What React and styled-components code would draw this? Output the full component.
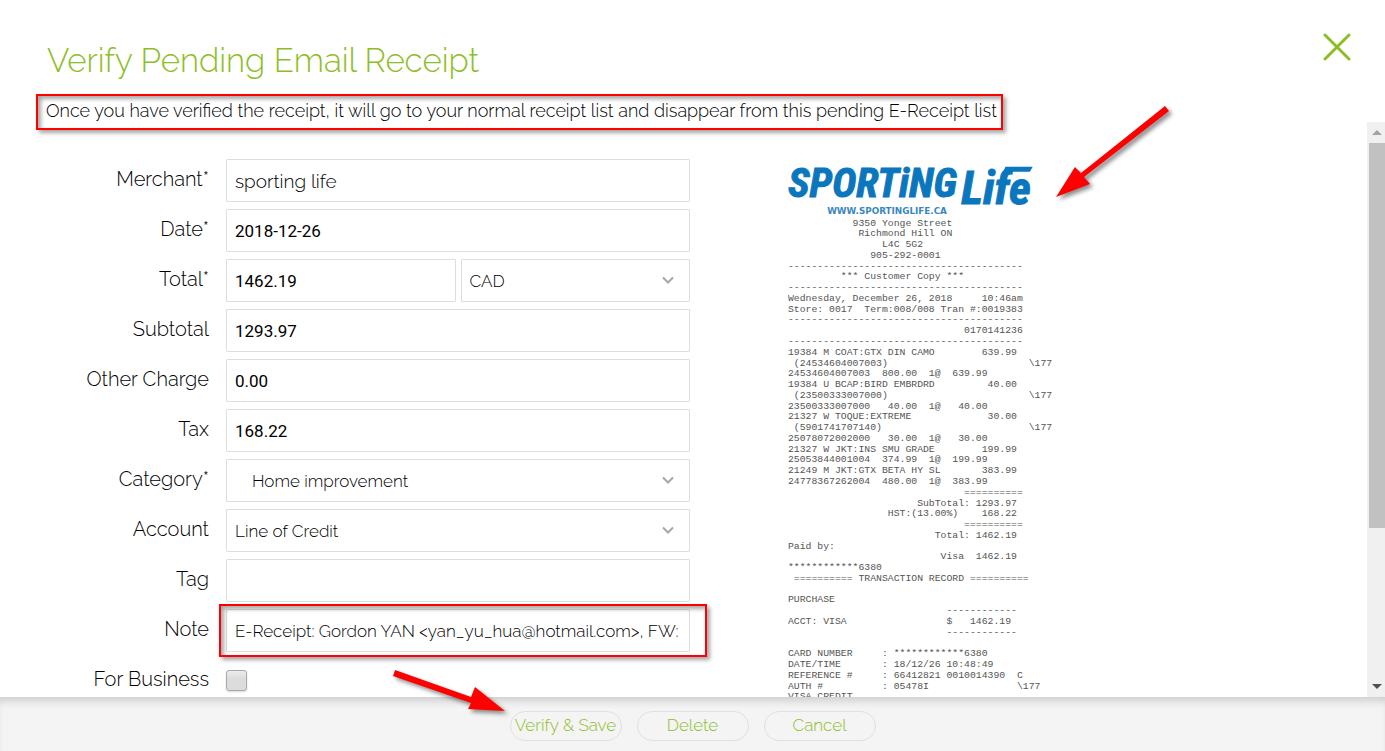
import React, { useState } from "react";
import styled, { createGlobalStyle, css } from "styled-components";

const GREEN = "#8ebe27";
const RED = "#ff0000";

const at = (...parts) =>
  parts.reduce((line, [col, text]) => line.padEnd(col) + text, "");

const DASHES = "-".repeat(40);
const STARS = "*".repeat(12);

const RECEIPT_LINES = [
  at([11, "9350 Yonge Street"]),
  at([12, "Richmond Hill ON"]),
  at([16, "L4C 5G2"]),
  at([14, "905-292-0001"]),
  DASHES,
  at([9, "*** Customer Copy ***"]),
  DASHES,
  at([0, "Wednesday, December 26, 2018"], [33, "10:46am"]),
  "Store: 0017  Term:008/008 Tran #:0019383",
  DASHES,
  at([30, "0170141236"]),
  DASHES,
  at([0, "19384 M COAT:GTX DIN CAMO"], [33, "639.99"]),
  at([1, "(24534604007003)"], [41, "\\177"]),
  at([0, "24534604007003"], [16, "800.00"], [24, "1@"], [28, "639.99"]),
  at([0, "19384 U BCAP:BIRD EMBRDRD"], [34, "40.00"]),
  at([1, "(23500333007000)"], [41, "\\177"]),
  at([0, "23500333007000"], [17, "40.00"], [24, "1@"], [29, "40.00"]),
  at([0, "21327 W TOQUE:EXTREME"], [34, "30.00"]),
  at([1, "(5901741707140)"], [41, "\\177"]),
  at([0, "25078072002000"], [17, "30.00"], [24, "1@"], [29, "30.00"]),
  at([0, "21327 W JKT:INS SMU GRADE"], [33, "199.99"]),
  at([0, "25053844001004"], [16, "374.99"], [24, "1@"], [28, "199.99"]),
  at([0, "21249 M JKT:GTX BETA HY SL"], [33, "383.99"]),
  at([0, "24778367262004"], [16, "480.00"], [24, "1@"], [28, "383.99"]),
  at([30, "=========="]),
  at([22, "SubTotal:"], [32, "1293.97"]),
  at([17, "HST:(13.00%)"], [33, "168.22"]),
  at([30, "=========="]),
  at([25, "Total:"], [32, "1462.19"]),
  "Paid by:",
  at([26, "Visa"], [32, "1462.19"]),
  `${STARS}6380`,
  at([1, "=========="], [12, "TRANSACTION RECORD"], [31, "=========="]),
  "",
  "PURCHASE",
  at([27, "------------"]),
  at([0, "ACCT: VISA"], [27, "$"], [31, "1462.19"]),
  at([27, "------------"]),
  "",
  at([0, "CARD NUMBER"], [16, `: ${STARS}6380`]),
  at([0, "DATE/TIME"], [16, ": 18/12/26 10:48:49"]),
  at([0, "REFERENCE #"], [16, ": 66412821 0010014390"], [39, "C"]),
  at([0, "AUTH #"], [16, ": 05478I"], [39, "\\177"]),
  "VISA CREDIT",
];

function Field({ id, label, children }) {
  return (
    <Row>
      <Label htmlFor={id}>{label}</Label>
      <Controls>{children}</Controls>
    </Row>
  );
}

function TextField({ id, label, value, onChange, numeric, large }) {
  return (
    <Field id={id} label={label}>
      <Input
        id={id}
        name={id}
        type="text"
        value={value}
        onChange={onChange}
        $numeric={numeric}
        $large={large}
      />
    </Field>
  );
}

function Dropdown({ indent, children, ...props }) {
  return (
    <SelectWrap>
      <Select $indent={indent} {...props}>
        {children}
      </Select>
      <Chevron viewBox="0 0 12 8" aria-hidden="true">
        <path d="M1 1.500l5 5 5-5" />
      </Chevron>
    </SelectWrap>
  );
}

function Receipt() {
  return (
    <ReceiptImage viewBox="0 0 286 562" role="img" aria-label="Receipt">
      <g fill="#0a76bd" stroke="#0a76bd">
        <LogoText x="0" y="39" fontSize="42">
          SPORTiNG
        </LogoText>
        <LogoText x="177" y="46" fontSize="48">
          Life
        </LogoText>
        <path d="M222 8h28l-3 5h-27z" stroke="none" />
      </g>
      <SiteText x="40" y="56">
        WWW.SPORTINGLIFE.CA
      </SiteText>
      {RECEIPT_LINES.map((line, i) => (
        <ReceiptText key={i} x="0" y={68 + i * 11}>
          {line}
        </ReceiptText>
      ))}
    </ReceiptImage>
  );
}

function App() {
  const [values, setValues] = useState({
    merchant: "sporting life",
    date: "2018-12-26",
    total: "1462.19",
    currency: "CAD",
    subtotal: "1293.97",
    otherCharge: "0.00",
    tax: "168.22",
    category: "Home improvement",
    account: "Line of Credit",
    tag: "",
    note: "E-Receipt: Gordon YAN <yan_yu_hua@hotmail.com>, FW: Y",
  });

  const onChange = (e) => {
    setValues({ ...values, [e.target.name]: e.target.value });
  };

  return (
    <Page>
      <GlobalStyle />

      <Header>
        <div>
          <Title>Verify Pending Email Receipt</Title>
          <Notice>
            Once you have verified the receipt, it will go to your normal
            receipt list and disappear from this pending E-Receipt list
          </Notice>
        </div>
        <CloseButton aria-label="Close">
          <svg width="28" height="28" viewBox="0 0 28 28">
            <path d="M2 2l24 24M26 2l-24 24" />
          </svg>
        </CloseButton>
      </Header>

      <Body>
        <Content>
          <Form>
            <TextField
              id="merchant"
              label="Merchant*"
              value={values.merchant}
              onChange={onChange}
              large
            />
            <TextField
              id="date"
              label="Date*"
              value={values.date}
              onChange={onChange}
              numeric
            />
            <Field id="total" label="Total*">
              <Input
                id="total"
                name="total"
                type="text"
                value={values.total}
                onChange={onChange}
                $numeric
              />
              <Dropdown
                name="currency"
                aria-label="Currency"
                value={values.currency}
                onChange={onChange}
              >
                <option>CAD</option>
              </Dropdown>
            </Field>
            <TextField
              id="subtotal"
              label="Subtotal"
              value={values.subtotal}
              onChange={onChange}
              numeric
            />
            <TextField
              id="otherCharge"
              label="Other Charge"
              value={values.otherCharge}
              onChange={onChange}
              numeric
            />
            <TextField
              id="tax"
              label="Tax"
              value={values.tax}
              onChange={onChange}
              numeric
            />
            <Field id="category" label="Category*">
              <Dropdown
                id="category"
                name="category"
                value={values.category}
                onChange={onChange}
                indent
              >
                <option>Home improvement</option>
              </Dropdown>
            </Field>
            <Field id="account" label="Account">
              <Dropdown
                id="account"
                name="account"
                value={values.account}
                onChange={onChange}
              >
                <option>Line of Credit</option>
              </Dropdown>
            </Field>
            <TextField
              id="tag"
              label="Tag"
              value={values.tag}
              onChange={onChange}
            />
            <Field id="note" label="Note">
              <Input
                id="note"
                name="note"
                type="text"
                value={values.note}
                onChange={onChange}
              />
              <Highlight />
            </Field>
            <Field id="business" label="For Business">
              <Checkbox id="business" type="checkbox" />
            </Field>
          </Form>

          <Preview>
            <Receipt />
          </Preview>
        </Content>

        <Scrollbar>
          <ScrollButton aria-label="Scroll up">
            <svg width="10" height="5" viewBox="0 0 10 5">
              <path d="M5 0l5 5H0z" fill="#a3a3a3" />
            </svg>
          </ScrollButton>
          <Thumb />
          <ScrollButton aria-label="Scroll down">
            <svg width="10" height="5" viewBox="0 0 10 5">
              <path d="M0 0h10L5 5z" fill="#505050" />
            </svg>
          </ScrollButton>
        </Scrollbar>

        <ReceiptArrow viewBox="0 0 120 100" aria-hidden="true">
          <path d="M110 0l4 5L29 71l6 7L1 91l19-30 6 6z" />
        </ReceiptArrow>
      </Body>

      <Footer>
        <Action>
          Verify &amp; Save
          <SaveArrow viewBox="0 0 120 52" aria-hidden="true">
            <path d="M2 0l76 27 4-10 30 24-37-2 3-6L0 6z" />
          </SaveArrow>
        </Action>
        <Action>Delete</Action>
        <Action>Cancel</Action>
      </Footer>
    </Page>
  );
}

const GlobalStyle = createGlobalStyle`
  * {
    box-sizing: border-box;
  }

  body {
    margin: 0;
    background: #fff;
    color: #000;
    font-family: Raleway, Lato, sans-serif;
    font-weight: 300;
  }

  button,
  input,
  select {
    font: inherit;
    color: inherit;
  }
`;

const Page = styled.div`
  display: flex;
  flex-direction: column;
  height: 100vh;
  overflow: hidden;
`;

const Header = styled.header`
  display: flex;
  justify-content: space-between;
  align-items: flex-start;
  padding: 32px 33px 0 36px;
`;

const Title = styled.h1`
  margin: 8px 0 12px;
  padding-left: 11px;
  color: ${GREEN};
  font-size: 33px;
  line-height: 42px;
  font-weight: 300;
`;

const Notice = styled.p`
  width: fit-content;
  margin: 0;
  padding: 0 4px 2px 8px;
  border: 2px solid ${RED};
  box-shadow: 3px 3px 4px rgba(0, 0, 0, 0.35),
    inset 3px 3px 4px rgba(0, 0, 0, 0.35);
  font-size: 18px;
  line-height: 30px;
`;

const CloseButton = styled.button`
  display: flex;
  padding: 1px;
  border: 0;
  background: none;
  cursor: pointer;

  path {
    fill: none;
    stroke: ${GREEN};
    stroke-width: 3;
    stroke-linecap: round;
  }
`;

const Body = styled.main`
  position: relative;
  display: flex;
  flex: 1;
  min-height: 0;
  margin-top: -8px;
`;

const Content = styled.div`
  display: grid;
  flex: 1;
  grid-template-columns: minmax(0, 690px) minmax(280px, 1fr);
  align-items: start;
  padding-top: 37px;
  overflow-y: auto;
  scrollbar-width: none;
`;

const Form = styled.form`
  display: flex;
  flex-direction: column;
  gap: 7px;
`;

const Row = styled.div`
  display: flex;
  gap: 17px;
`;

const Label = styled.label`
  flex: 0 0 209px;
  font-size: 20px;
  line-height: 40px;
  text-align: right;
`;

const Controls = styled.div`
  position: relative;
  display: grid;
  flex: 1;
  grid-auto-columns: minmax(0, 1fr);
  grid-auto-flow: column;
  align-items: center;
  gap: 5px;
  min-width: 0;
  height: 43px;
`;

const box = css`
  width: 100%;
  height: 43px;
  border: 1px solid #dedede;
  border-radius: 1px;
  background: #fff;
  outline: none;
  font-size: 17px;
`;

const Input = styled.input`
  ${box}
  padding: 0 8px;
  ${({ $large }) => $large && "font-size: 19px;"}
  ${({ $numeric }) =>
    $numeric &&
    css`
      font-family: Roboto, sans-serif;
      font-weight: 400;
    `}
`;

const SelectWrap = styled.div`
  position: relative;
`;

const Select = styled.select`
  ${box}
  display: block;
  appearance: none;
  padding: 0 30px 0 ${({ $indent }) => ($indent ? 25 : 8)}px;
`;

const Chevron = styled.svg`
  position: absolute;
  top: 17px;
  right: 16px;
  width: 12px;
  height: 8px;
  fill: none;
  stroke: #a6a6a6;
  stroke-width: 2;
  pointer-events: none;
`;

const Checkbox = styled.input`
  appearance: none;
  width: 21px;
  height: 21px;
  margin: 0;
  border: 1px solid #a8a8a8;
  border-radius: 3px;
  background: linear-gradient(#ececec, #dcdcdc 40%);
  box-shadow: 0 1px 2px rgba(0, 0, 0, 0.15);
`;

const Highlight = styled.div`
  position: absolute;
  inset: -5px -17px -5px -7px;
  border: 2px solid ${RED};
  box-shadow: 3px 3px 4px rgba(0, 0, 0, 0.35),
    inset 3px 3px 4px rgba(0, 0, 0, 0.35);
  pointer-events: none;
`;

const Preview = styled.section`
  padding-left: 98px;
`;

const ReceiptImage = styled.svg`
  display: block;
  width: 280px;
  height: auto;
`;

const LogoText = styled.text`
  font-family: "Roboto Condensed", "Liberation Sans", sans-serif;
  font-style: italic;
  font-weight: 700;
`;

const SiteText = styled.text`
  fill: #3a87bd;
  font-family: "DejaVu Sans", sans-serif;
  font-size: 9px;
  font-weight: 700;
`;

const ReceiptText = styled.text`
  fill: #555;
  font-family: "Liberation Mono", monospace;
  font-size: 10px;
  font-weight: 400;
  white-space: pre;
`;

const Scrollbar = styled.div`
  display: flex;
  flex-direction: column;
  flex: 0 0 18px;
  padding-left: 2px;
  background: #f0f0f0;
`;

const ScrollButton = styled.button`
  display: flex;
  justify-content: center;
  align-items: center;
  height: 21px;
  padding: 0;
  border: 0;
  background: none;

  &:last-child {
    margin-top: auto;
  }
`;

const Thumb = styled.div`
  height: 67%;
  background: #c1c1c1;
`;

const ReceiptArrow = styled.svg`
  position: absolute;
  top: -16px;
  left: 1055px;
  width: 120px;
  height: 100px;
  fill: ${RED};
  filter: drop-shadow(3px 3px 2px rgba(0, 0, 0, 0.45));
  pointer-events: none;
`;

const Footer = styled.footer`
  display: flex;
  justify-content: center;
  align-items: center;
  gap: 15px;
  height: 54px;
  padding-top: 3px;
  background: #f4f4f4;
  box-shadow: inset 0 8px 8px -4px rgba(0, 0, 0, 0.16);
`;

const Action = styled.button`
  position: relative;
  width: 112px;
  height: 30px;
  padding: 0 0 2px;
  border: 1px solid #e0e0e0;
  border-radius: 15px;
  background: none;
  color: ${GREEN};
  font-size: 17px;
  line-height: 26px;
  white-space: nowrap;
  cursor: pointer;
`;

const SaveArrow = styled.svg`
  position: absolute;
  top: -42px;
  left: -118px;
  width: 120px;
  height: 52px;
  fill: ${RED};
  filter: drop-shadow(3px 3px 2px rgba(0, 0, 0, 0.45));
  pointer-events: none;
`;

export default App;
